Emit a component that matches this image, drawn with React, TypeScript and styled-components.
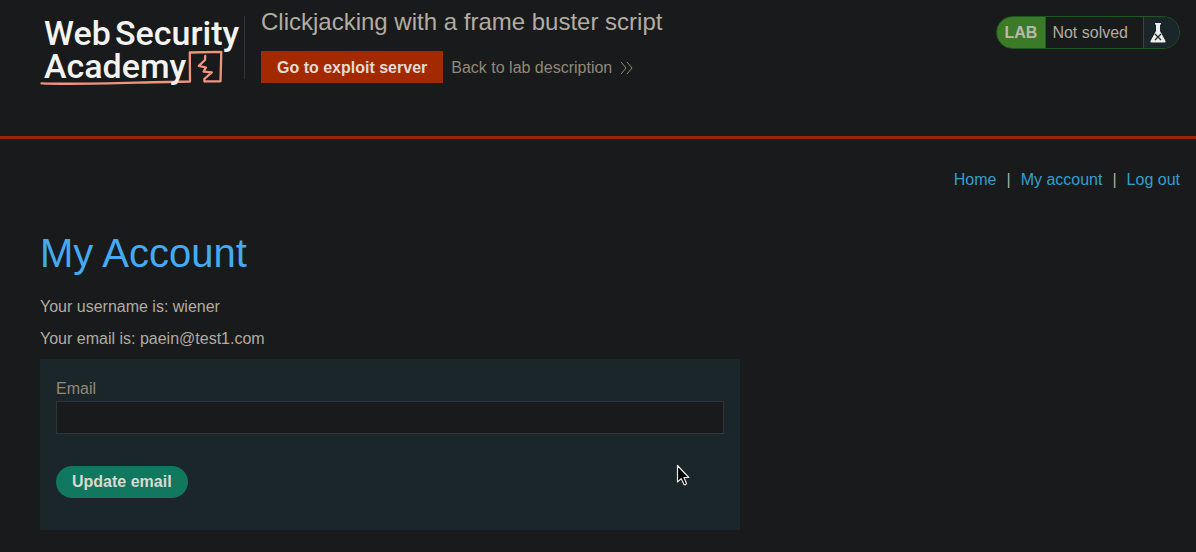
import React from "react";
import styled, { createGlobalStyle } from "styled-components";

const GlobalStyle = createGlobalStyle`
  * { box-sizing: border-box; }
  body {
    margin: 0;
    background: #181a1b;
    color: #b2aca2;
    font-family: "Liberation Sans", Arial, sans-serif;
    font-size: 16px;
    line-height: 24px;
  }
`;

const Header = styled.header`
  display: flex;
  align-items: flex-start;
  min-height: 139px;
  padding: 8px 16px 0 40px;
  border-bottom: 3px solid #992600;
`;

const LogoLink = styled.a`
  flex: none;
  width: 204px;
  height: 80px;
`;

const LogoArt = styled.svg`
  display: block;
`;

const Title = styled.div`
  flex: 1;
  margin-top: 8px;
  padding-left: 16px;
  border-left: 1px solid #303436;
  height: 63px;
`;

const LabName = styled.h2`
  margin: -8px 0 0;
  font-size: 24px;
  font-weight: 400;
  line-height: 28px;
`;

const Actions = styled.div`
  display: flex;
  align-items: center;
  gap: 8px;
  margin-top: 15px;
`;

const ExploitLink = styled.a`
  padding: 5px 16px 3px;
  background: #a32900;
  color: #e0dcd6;
  font-weight: 700;
  text-decoration: none;
`;

const BackLink = styled.a`
  display: flex;
  align-items: center;
  gap: 8px;
  padding-top: 1px;
  color: #928979;
  text-decoration: none;
`;

const Status = styled.div`
  display: flex;
  flex: none;
  margin-top: 8px;
  height: 33px;
  overflow: hidden;
  border: 1px solid #205723;
  border-radius: 17px;
  line-height: 32px;
`;

const StatusTag = styled.span`
  padding: 0 8px;
  background: #3b7a26;
  color: #bcb9ab;
  font-weight: 700;
`;

const StatusText = styled.span`
  padding: 0 15px 0 6px;
  border-left: 1px solid #205723;
`;

const StatusIcon = styled.span`
  display: flex;
  align-items: center;
  width: 36px;
  padding-left: 6px;
  border-left: 1px solid #205723;
  background: #1b262a;
`;

const Main = styled.main`
  padding: 29px 16px 0 40px;
`;

const Nav = styled.nav`
  display: flex;
  justify-content: flex-end;
  gap: 10px;
`;

const NavLink = styled.a`
  color: #349fce;
  text-decoration: none;
`;

const Heading = styled.h1`
  margin: 37px 0 0;
  color: #44aaf2;
  font-size: 40px;
  font-weight: 400;
  line-height: 48px;
`;

const Detail = styled.p`
  margin: 0 0 8px;

  ${Heading} + & {
    margin-top: 18px;
  }
`;

const Form = styled.form`
  position: relative;
  max-width: 700px;
  padding: 18px 16px 32px;
  background: #1b262a;
`;

const Label = styled.label`
  display: block;
  color: #928979;
`;

const Field = styled.input`
  display: block;
  width: 100%;
  height: 33px;
  padding: 0 8px;
  border: 1px solid #303436;
  background: #181a1b;
  color: #b2aca2;
  font: inherit;
`;

const Submit = styled.button`
  display: block;
  margin-top: 32px;
  padding: 4px 16px;
  border: 0;
  border-radius: 16px;
  background: #11775e;
  color: #dad8d3;
  font: inherit;
  font-weight: 700;
`;

const Pointer = styled.svg`
  position: absolute;
  left: 636px;
  top: 105px;
`;

function Logo() {
  return (
    <LogoArt width="204" height="80" viewBox="0 0 204 80" role="img" aria-label="Web Security Academy">
      <g fill="none" stroke="#ef957f" strokeLinejoin="round" strokeLinecap="round">
        <path d="M1.5 75.3 C40 77 90 74.5 150 73.5 L149.8 44.5 L181.3 43.8 L180.5 73.3 L164.7 73.3" strokeWidth="2.3" />
        <path d="M165.2 48 L165 52 L158.8 57.8 L166 59.5 L163.6 63.6 L171.8 64.4 L164.3 71 L164.6 73.3" strokeWidth="2.3" />
      </g>
      <g fill="#f3f3f1" fontFamily="Roboto, sans-serif" fontSize="34" fontWeight="500">
        <text x="4" y="37">Web</text>
        <text x="75" y="37">Security</text>
        <text x="4" y="70">Academy</text>
      </g>
    </LogoArt>
  );
}

function Chevrons() {
  return (
    <svg width="13" height="14" viewBox="0 0 13 14" fill="none" stroke="#928979" aria-hidden="true">
      <path d="M1 1 L6 7 L1 13 M7 1 L12 7 L7 13" />
    </svg>
  );
}

function Flask() {
  return (
    <svg width="16" height="20" viewBox="0 0 16 20" aria-hidden="true">
      <path d="M5 0 H11 V1.5 H10 V8 L15.5 18 Q16 19.5 14.5 19.5 H1.5 Q0 19.5 .5 18 L6 8 V1.5 H5 Z" fill="#eeeeec" />
      <path d="M5 11 L11 17 M11 11 L5 17" stroke="#1b262a" strokeWidth="1.2" />
    </svg>
  );
}

export default function App() {
  return (
    <>
      <GlobalStyle />
      <Header>
        <LogoLink href="#academy">
          <Logo />
        </LogoLink>
        <Title>
          <LabName>Clickjacking with a frame buster script</LabName>
          <Actions>
            <ExploitLink href="#exploit">Go to exploit server</ExploitLink>
            <BackLink href="#lab">
              Back to lab description
              <Chevrons />
            </BackLink>
          </Actions>
        </Title>
        <Status>
          <StatusTag>LAB</StatusTag>
          <StatusText>Not solved</StatusText>
          <StatusIcon>
            <Flask />
          </StatusIcon>
        </Status>
      </Header>
      <Main>
        <Nav>
          <NavLink href="#home">Home</NavLink>
          <span>|</span>
          <NavLink href="#account">My account</NavLink>
          <span>|</span>
          <NavLink href="#logout">Log out</NavLink>
        </Nav>
        <Heading>My Account</Heading>
        <Detail>Your username is: wiener</Detail>
        <Detail>Your email is: paein@test1.com</Detail>
        <Form onSubmit={(event) => event.preventDefault()}>
          <Label htmlFor="email">Email</Label>
          <Field id="email" type="email" name="email" />
          <Submit type="submit">Update email</Submit>
          <Pointer width="14" height="23" viewBox="0 0 14 23" aria-hidden="true">
            <path d="M1.5 1.5 V18 L5.2 14.6 L8 20.5 Q9.5 21.5 10.5 19.5 L8 13.5 H12.8 Z" fill="#000" stroke="#e8e8e8" strokeWidth="1.2" strokeLinejoin="round" />
          </Pointer>
        </Form>
      </Main>
    </>
  );
}
